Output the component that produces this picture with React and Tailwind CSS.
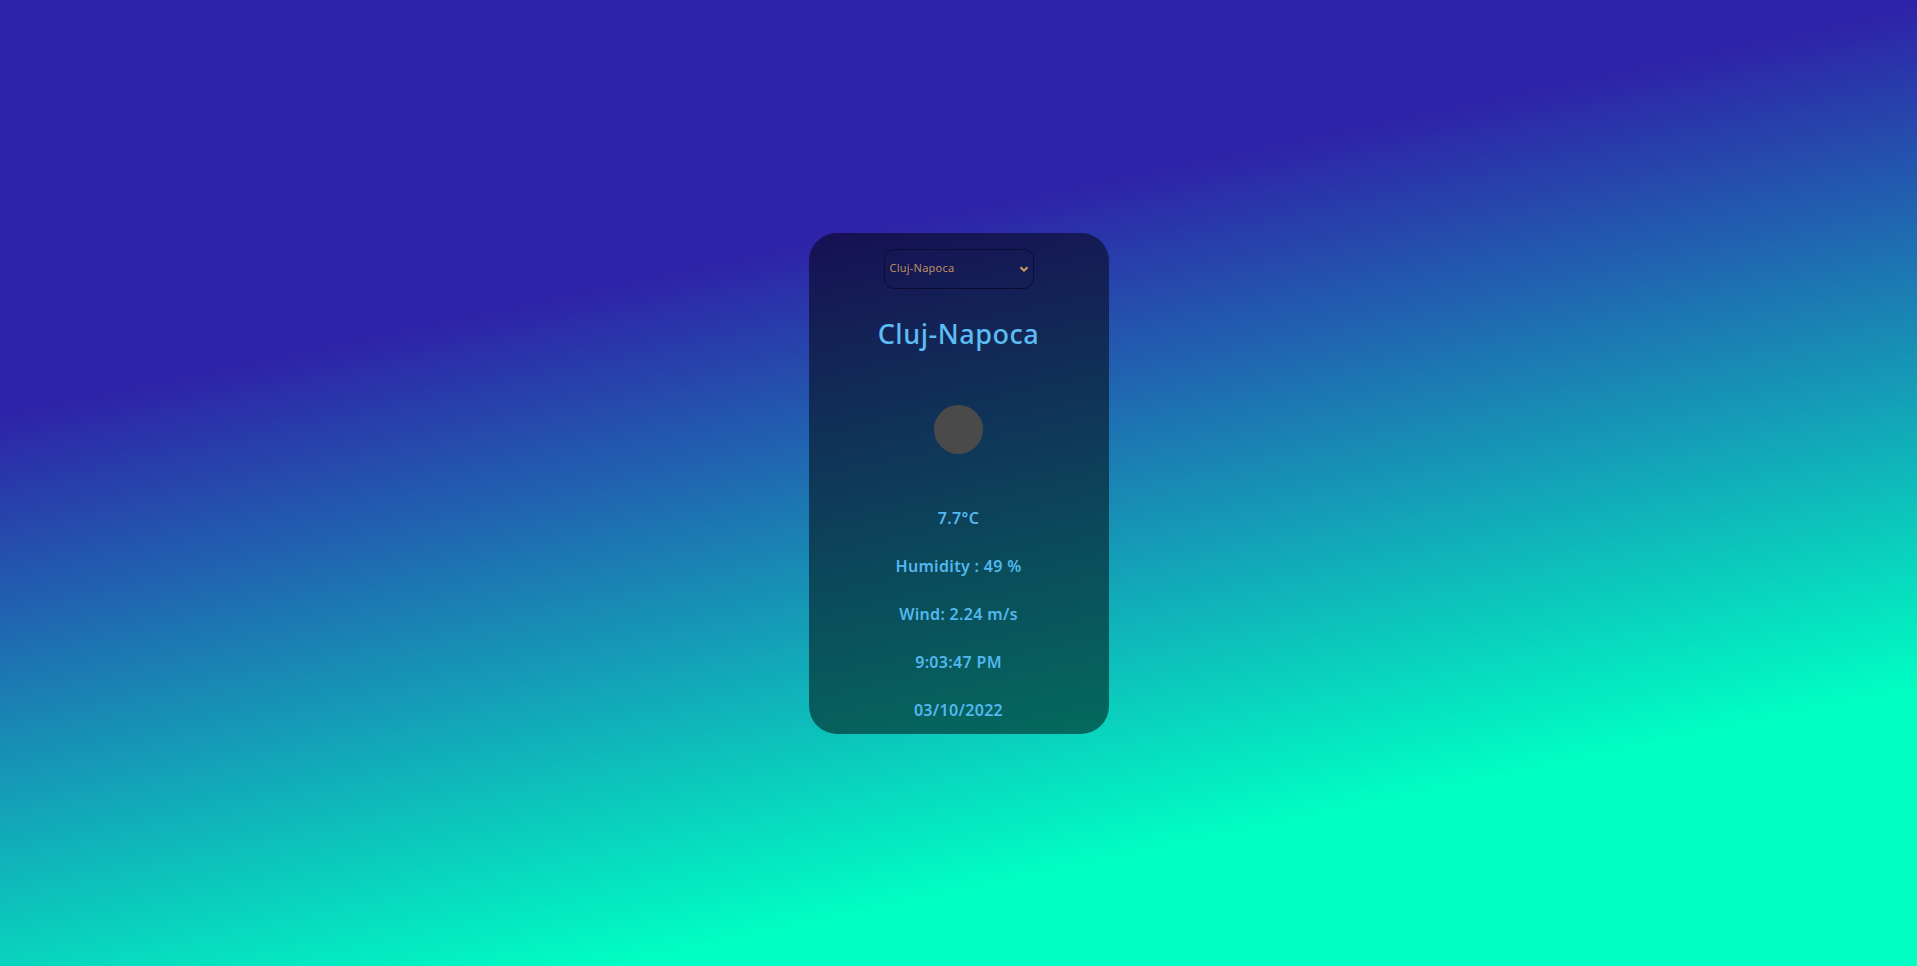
import React, { useState } from 'react';

const cities = ['Cluj-Napoca', 'Bucharest', 'Timisoara', 'Iasi', 'Brasov'];

const App = () => {
  const [city, setCity] = useState('Cluj-Napoca');

  return (
    <div
      className="h-screen w-full flex items-center justify-center bg-linear-[168deg] from-[#2e22a8] from-30% to-[#00ffc3] to-80%"
      style={{ fontFamily: '"Noto Sans", "Open Sans", sans-serif' }}
    >
      <div className="w-[300px] h-[501px] rounded-[28px] bg-black/50 flex flex-col items-center pt-4">
        {/* selector de ciudad */}
        <div className="relative w-[150px] h-10">
          <select
            value={city}
            onChange={(e) => setCity(e.target.value)}
            className="appearance-none w-full h-full rounded-[10px] border border-[#0b0d33] bg-transparent pl-[5px] text-[11px] tracking-[0.02em] text-[#b98f63] outline-none"
          >
            {cities.map((c) => (
              <option key={c} value={c} className="bg-[#16184f]">
                {c}
              </option>
            ))}
          </select>
          <svg
            className="absolute right-[5px] top-1/2 -translate-y-1/2 pointer-events-none"
            width="10"
            height="10"
            viewBox="0 0 10 10"
          >
            <path d="M1.5 3.2 L5 6.6 L8.5 3.2" stroke="#d1a35a" strokeWidth="2" fill="none" />
          </svg>
        </div>

        <h1 className="mt-[27px] h-9 leading-9 text-[27px] tracking-[0.02em] font-medium text-[#5cbdf2]">{city}</h1>

        <div className="mt-[53px] w-[49px] h-[49px] rounded-full bg-[#4a4a4a]" />

        <div className="mt-10 flex flex-col items-center text-[16px] tracking-[0.02em] font-semibold text-[#52b8ee]">
          <p className="h-12 flex items-center">7.7°C</p>
          <p className="h-12 flex items-center">Humidity : 49 %</p>
          <p className="h-12 flex items-center">Wind: 2.24 m/s</p>
          <p className="h-12 flex items-center">9:03:47 PM</p>
          <p className="h-12 flex items-center">03/10/2022</p>
        </div>
      </div>
    </div>
  );
};

export default App;
